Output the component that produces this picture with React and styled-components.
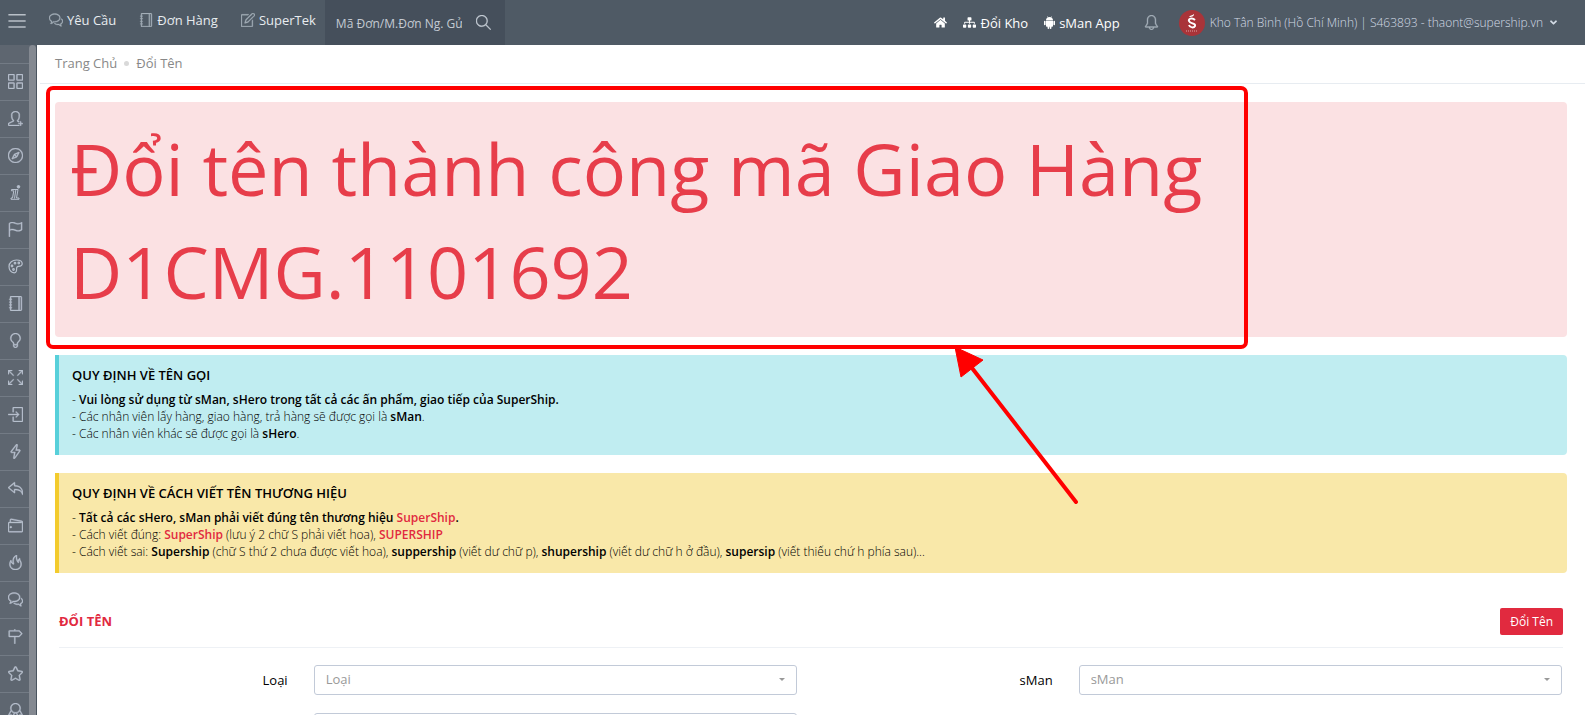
import React from 'react';
import styled, { createGlobalStyle } from 'styled-components';
import { FaAngleDown, FaHome, FaSitemap } from 'react-icons/fa';
import {
  SlActionUndo,
  SlBadge,
  SlBell,
  SlBubbles,
  SlBulb,
  SlCompass,
  SlDirection,
  SlEnergy,
  SlFire,
  SlFlag,
  SlGrid,
  SlLogin,
  SlMagnifier,
  SlMenu,
  SlNote,
  SlNotebook,
  SlSizeFullscreen,
  SlStar,
  SlUserFollow,
  SlWallet,
} from 'react-icons/sl';

const GlobalStyle = createGlobalStyle`
  * {
    box-sizing: border-box;
  }

  body {
    margin: 0;
    background: #fff;
    color: #000;
    font-family: 'Open Sans', sans-serif;
    font-size: 13px;
    overflow: hidden;
  }

  a {
    color: inherit;
    text-decoration: none;
  }
`;

const Page = styled.div`
  position: relative;
  height: 100vh;
  display: flex;
  flex-direction: column;
  overflow: hidden;
`;

const TopBar = styled.header`
  display: flex;
  flex: none;
  height: 45px;
  background: #4f5a65;
  color: #fff;
`;

const MenuToggle = styled.button`
  display: flex;
  width: 37px;
  padding: 12px 8px;
  border: 0;
  background: none;
  color: #b9c0c8;
`;

const TopNav = styled.nav`
  display: flex;
  gap: 23px;
  padding: 0 9px 5px 12px;
`;

const NavLink = styled.a`
  display: flex;
  align-items: center;
  gap: 4px;
  color: ${({ $soft }) => ($soft ? '#e8ecf0' : '#fff')};

  svg {
    color: ${({ $soft }) => ($soft ? '#a4aeb8' : 'inherit')};
    stroke: currentColor;
    stroke-width: ${({ $soft }) => ($soft ? '24' : '0')};
  }
`;

const SearchForm = styled.form`
  display: flex;
  align-items: center;
  gap: 14px;
  width: 180px;
  padding: 0 14px 0 11px;
  background: #454f5b;
`;

const SearchInput = styled.input`
  flex: 1;
  min-width: 0;
  padding: 2px 0 0;
  border: 0;
  outline: 0;
  background: none;
  font: 12px 'Open Sans', sans-serif;
  text-overflow: clip;

  &::placeholder {
    color: #c4cbd3;
    opacity: 1;
  }
`;

const IconButton = styled.button`
  display: flex;
  padding: 0;
  border: 0;
  background: none;
  color: ${({ $color }) => $color};

  svg {
    stroke: currentColor;
    stroke-width: 24;
  }
`;

const UserNav = styled.nav`
  display: flex;
  align-items: center;
  gap: 16px;
  margin-left: auto;
  padding-right: 26px;

  ${IconButton} {
    margin: 0 4px 0 8px;
  }
`;

const UserLink = styled.a`
  display: flex;
  align-items: center;
  gap: 5px;
  color: #d3dbe5;
  font-size: 12px;
  font-weight: 300;
`;

const Body = styled.div`
  display: flex;
  flex: 1;
  min-height: 0;
`;

const Sidebar = styled.aside`
  display: flex;
  flex: none;
  width: 37px;
  border-right: 1px solid #4a545f;
  background: #5e6670;
  overflow: hidden;
`;

const SideMenu = styled.nav`
  flex: 1;
  padding-top: 18px;
`;

const SideLink = styled.a`
  display: flex;
  align-items: center;
  height: 37px;
  padding: 0 0 2px 8px;
  border-top: 1px solid #737b85;
  color: #b7c0cd;

  svg {
    stroke: currentColor;
    stroke-width: 28;
  }
`;

const ScrollThumb = styled.div`
  width: 7px;
  border-radius: 7px 7px 0 0;
  background: #848991;
`;

const Main = styled.main`
  flex: 1;
  min-width: 0;
  padding-left: 3px;
`;

const Breadcrumb = styled.nav`
  display: flex;
  align-items: center;
  gap: 7px;
  height: 39px;
  padding: 0 15px 2px;
  border-bottom: 1px solid #e7ecf1;
  color: #888;
`;

const Dot = styled.span`
  width: 5px;
  height: 5px;
  border-radius: 50%;
  background: #d9d9d9;
`;

const Content = styled.div`
  padding: 18px 18px 0 15px;
`;

const Alert = styled.div`
  padding: 15px 15px 14px;
  border-radius: 4px;
  background: #fbe1e3;
  color: #e73d4a;
  font-size: 72px;
  line-height: 103px;

  p {
    max-width: 1180px;
    margin: 0;
  }
`;

const Note = styled.section`
  margin-top: 18px;
  padding: 11px 13px 13px;
  border-left: 4px solid ${({ $edge }) => $edge};
  border-radius: 0 4px 4px 0;
  background: ${({ $fill }) => $fill};
  font-size: 12px;
  font-weight: 350;
  line-height: 17px;

  h4 {
    margin: 0 0 6px;
    font-size: 13px;
    font-weight: 600;
    line-height: 19px;
  }

  p {
    margin: 0;
  }

  b {
    font-weight: 600;
  }
`;

const Brand = styled.b`
  color: #e12a3f;
`;

const Portlet = styled.section`
  padding: 30px 4px 0;
`;

const PortletHead = styled.div`
  display: flex;
  align-items: center;
  justify-content: space-between;
  height: 45px;
  margin-bottom: 17px;
  padding-bottom: 8px;
  border-bottom: 1px solid #eef1f5;

  h2 {
    margin: 0;
    color: #e12a3f;
    font-size: 13px;
    font-weight: 700;
  }
`;

const SubmitButton = styled.button`
  height: 27px;
  padding: 0 10px;
  border: 0;
  border-radius: 2px;
  background: #e12a3f;
  color: #fff;
  font: 12px 'Open Sans', sans-serif;
`;

const FormGrid = styled.div`
  display: grid;
  grid-template-columns: 1fr 1fr;
  gap: 18px 40px;
  padding: 0 1px 0 13px;
`;

const Field = styled.div`
  display: grid;
  grid-template-columns: 1fr 2fr;
  align-items: center;

  label {
    padding-right: 26px;
    text-align: right;
  }
`;

const SelectBox = styled.div`
  position: relative;
  grid-column: 2;

  &::after {
    content: '';
    position: absolute;
    top: 13px;
    right: 12px;
    border: 3px solid transparent;
    border-top-color: #999;
    border-bottom: 0;
    pointer-events: none;
  }
`;

const Select = styled.select`
  display: block;
  width: 100%;
  height: 30px;
  padding: 0 24px 2px 11px;
  border: 1px solid #c2cad8;
  border-radius: 3px;
  appearance: none;
  background: #fff;
  color: #999;
  font: 13px 'Open Sans', sans-serif;
`;

const Annotation = styled.svg`
  position: absolute;
  top: 0;
  left: 0;
  pointer-events: none;
`;

const InfoIcon = ({ size }) => (
  <svg width={size} height={size} viewBox="0 0 15 15" aria-hidden="true">
    <g fill="none" strokeWidth="1">
      <circle cx="10.500" cy="1.800" r="1.300" fill="currentColor" />
      <path d="M3.500 4.500h6.500L8.500 13h2.500v1.300H3V13h1.500L5.800 5.800H3.500zM7.800 5L6.500 13.500" />
    </g>
  </svg>
);

const PaletteIcon = ({ size }) => (
  <svg width={size} height={size} viewBox="0 0 15 15" aria-hidden="true">
    <g fill="none" strokeWidth="1.2">
      <path d="M1 7.500C1 3.500 4.500 1 8.500 1c3.500 0 5.700 1.500 5.700 3.700 0 2.300-2 2.500-3.700 2.600-1.700.2-2 1-1.900 2.300.1 2-.3 4.200-2.400 4.200C3 13.800 1 10.800 1 7.500z" />
      <circle cx="4" cy="7" r="0.8" />
      <circle cx="7" cy="4.200" r="0.8" />
      <circle cx="10.800" cy="4" r="0.8" />
      <circle cx="5.500" cy="10.500" r="0.8" />
    </g>
  </svg>
);

const AndroidIcon = () => (
  <svg width="11" height="13" viewBox="0 0 11 13" aria-hidden="true">
    <path
      d="M2 4.200C2 2.800 2.800 1.900 3.700 1.400L3.100.4l.4-.2.7 1a4 4 0 0 1 2.600 0l.7-1 .4.2-.6 1C8.200 1.900 9 2.800 9 4.200zM2 4.700h7v5c0 .6-.4 1-1 1h-.6v1.500a.8.8 0 0 1-1.600 0v-1.500h-.6v1.500a.8.8 0 0 1-1.600 0v-1.500H3c-.6 0-1-.4-1-1zM0 5.500a.8.8 0 0 1 1.600 0v3a.8.8 0 0 1-1.600 0zM9.400 5.500a.8.8 0 0 1 1.600 0v3a.8.8 0 0 1-1.600 0z"
      fill="currentColor"
    />
  </svg>
);

const Avatar = () => (
  <svg width="26" height="26" viewBox="0 0 26 26" aria-hidden="true">
    <circle cx="13" cy="13" r="13" fill="#a93439" />
    <path d="M10 7c1-2 3-1 5-3 0 2-1 3-5 3z" fill="#fff" />
    <path
      d="M16 10c-3-3-7-1-6 1 1 3 7 2 6 5-1 2-5 2-6-1"
      fill="none"
      stroke="#fff"
      strokeWidth="2"
    />
    <path d="M7 21h12" stroke="#e0a6a8" strokeDasharray="1 1" />
  </svg>
);

const sideItems = [
  ['Bảng Điều Khiển', SlGrid],
  ['Người Dùng', SlUserFollow],
  ['Khám Phá', SlCompass],
  ['Thông Tin', InfoIcon],
  ['Báo Cáo', SlFlag],
  ['Giao Diện', PaletteIcon],
  ['Sổ Tay', SlNotebook],
  ['Ý Tưởng', SlBulb],
  ['Mở Rộng', SlSizeFullscreen],
  ['Nhập Kho', SlLogin],
  ['Nhanh', SlEnergy],
  ['Trả Hàng', SlActionUndo],
  ['Ví', SlWallet],
  ['Nổi Bật', SlFire],
  ['Trao Đổi', SlBubbles],
  ['Tuyến', SlDirection],
  ['Đánh Giá', SlStar],
  ['Huy Hiệu', SlBadge],
];

const SelectField = ({ id, label }) => (
  <Field>
    {label && <label htmlFor={id}>{label}</label>}
    <SelectBox>
      <Select id={id} aria-label={label ? undefined : 'Mã'}>
        {label && <option>{label}</option>}
      </Select>
    </SelectBox>
  </Field>
);

const App = () => (
  <>
    <GlobalStyle />
    <Page>
      <TopBar>
        <MenuToggle aria-label="Menu">
          <SlMenu size={18} />
        </MenuToggle>
        <TopNav>
          <NavLink href="#" $soft>
            <SlBubbles size={14} />
            Yêu Cầu
          </NavLink>
          <NavLink href="#" $soft>
            <SlNotebook size={14} />
            Đơn Hàng
          </NavLink>
          <NavLink href="#" $soft>
            <SlNote size={14} />
            SuperTek
          </NavLink>
        </TopNav>
        <SearchForm>
          <SearchInput placeholder="Mã Đơn/M.Đơn Ng. Gửi" aria-label="Mã Đơn" />
          <IconButton type="button" aria-label="Tìm" $color="#c4cbd3">
            <SlMagnifier size={15} />
          </IconButton>
        </SearchForm>
        <UserNav>
          <NavLink href="#" aria-label="Trang Chủ">
            <FaHome size={13} />
          </NavLink>
          <NavLink href="#">
            <FaSitemap size={13} />
            Đổi Kho
          </NavLink>
          <NavLink href="#">
            <AndroidIcon />
            sMan App
          </NavLink>
          <IconButton aria-label="Thông báo" $color="#a4aeb8">
            <SlBell size={15} />
          </IconButton>
          <UserLink href="#">
            <Avatar />
            Kho Tân Bình (Hồ Chí Minh) | S463893 - thaont@supership.vn
            <FaAngleDown size={11} />
          </UserLink>
        </UserNav>
      </TopBar>
      <Body>
        <Sidebar>
          <SideMenu>
            {sideItems.map(([name, Icon]) => (
              <SideLink key={name} href="#" aria-label={name}>
                <Icon size={15} />
              </SideLink>
            ))}
          </SideMenu>
          <ScrollThumb />
        </Sidebar>
        <Main>
          <Breadcrumb>
            <a href="#">Trang Chủ</a>
            <Dot />
            <span>Đổi Tên</span>
          </Breadcrumb>
          <Content>
            <Alert role="alert">
              <p>Đổi tên thành công mã Giao Hàng D1CMG.1101692</p>
            </Alert>
            <Note $edge="#58d0da" $fill="#c0edf1">
              <h4>QUY ĐỊNH VỀ TÊN GỌI</h4>
              <p>
                - <b>Vui lòng sử dụng từ sMan, sHero trong tất cả các ấn phẩm, giao tiếp của SuperShip.</b>
              </p>
              <p>
                - Các nhân viên lấy hàng, giao hàng, trả hàng sẽ được gọi là <b>sMan</b>.
              </p>
              <p>
                - Các nhân viên khác sẽ được gọi là <b>sHero</b>.
              </p>
            </Note>
            <Note $edge="#f3cb2d" $fill="#f9e8a9">
              <h4>QUY ĐỊNH VỀ CÁCH VIẾT TÊN THƯƠNG HIỆU</h4>
              <p>
                -{' '}
                <b>
                  Tất cả các sHero, sMan phải viết đúng tên thương hiệu <Brand>SuperShip</Brand>.
                </b>
              </p>
              <p>
                - Cách viết đúng: <Brand>SuperShip</Brand> (lưu ý 2 chữ S phải viết hoa),{' '}
                <Brand>SUPERSHIP</Brand>
              </p>
              <p>
                - Cách viết sai: <b>Supership</b> (chữ S thứ 2 chưa được viết hoa), <b>suppership</b>{' '}
                (viết dư chữ p), <b>shupership</b> (viết dư chữ h ở đầu), <b>supersip</b> (viết thiếu
                chứ h phía sau)...
              </p>
            </Note>
            <Portlet>
              <PortletHead>
                <h2>ĐỔI TÊN</h2>
                <SubmitButton>Đổi Tên</SubmitButton>
              </PortletHead>
              <FormGrid>
                <SelectField id="type" label="Loại" />
                <SelectField id="sman" label="sMan" />
                <SelectField id="code" />
              </FormGrid>
            </Portlet>
          </Content>
        </Main>
      </Body>
      <Annotation width="1585" height="715" viewBox="0 0 1585 715" aria-hidden="true">
        <rect x="48" y="88" width="1198" height="259" rx="5" fill="none" stroke="#f00" strokeWidth="4" />
        <path d="M1076 502L972 368" stroke="#f00" strokeWidth="4" strokeLinecap="round" />
        <path d="M955 347l28 13-22 17z" fill="#f00" stroke="#f00" strokeLinejoin="round" />
      </Annotation>
    </Page>
  </>
);

export default App;
